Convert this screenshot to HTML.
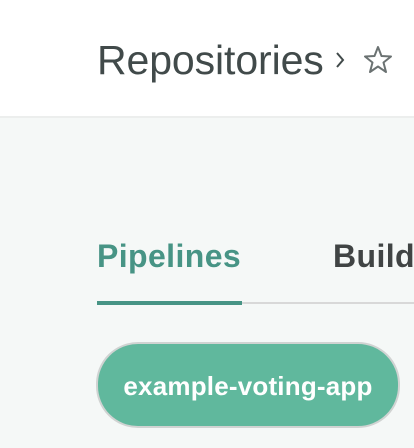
<!DOCTYPE html>
<html><head><style>
body{margin:0;width:414px;height:448px;overflow:hidden;background:#f5f8f7;font-family:"Liberation Sans",sans-serif;position:relative}
.hdr{position:absolute;left:0;top:0;width:414px;height:116px;background:#fff;border-bottom:2px solid #eceeed}
.t{position:absolute;left:97px;top:37px;font-size:41px;color:#414a4a;letter-spacing:-0.1px;white-space:nowrap}
.chev{position:absolute;left:333px;top:48px}
.star{position:absolute;left:362px;top:45px}
.tab{position:absolute;top:238px;font-size:32px;font-weight:bold;white-space:nowrap;letter-spacing:0.4px}
.line{position:absolute;left:97px;top:302px;width:317px;height:2px;background:#d8d8d8}
.act{position:absolute;left:97px;top:301px;width:145px;height:4px;background:#479485}
.btn{position:absolute;left:96px;top:342px;width:300px;height:82px;border:2px solid #d0d3d2;border-radius:42px;background:#60b89d;color:#fff;font-weight:bold;font-size:26px;text-align:center;line-height:84px;letter-spacing:0.2px}
</style></head><body>
<div class="hdr">
<div class="t">Repositories</div>
<svg class="chev" width="14" height="24" viewBox="0 0 14 24"><path d="M4 5 L10 12 L4 19" fill="none" stroke="#414a4a" stroke-width="2"/></svg>
<svg class="star" width="32" height="30" viewBox="0 0 32 30"><path d="M16 2 L19.5 11 L29 11.5 L21.5 17.5 L24 27 L16 21.5 L8 27 L10.5 17.5 L3 11.5 L12.5 11 Z" fill="none" stroke="#6b7272" stroke-width="2" stroke-linejoin="round"/></svg>
</div>
<div class="tab" style="left:97px;color:#479485">Pipelines</div>
<div class="tab" style="left:333px;color:#404444">Builds</div>
<div class="line"></div><div class="act"></div>
<div class="btn">example-voting-app</div>
</body></html>
